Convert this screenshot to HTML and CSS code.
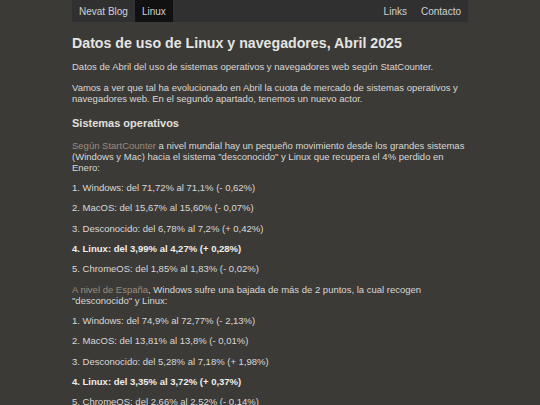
FILE: index.html
```html
<!DOCTYPE html>
<html lang="es">
<head>
<meta charset="utf-8">
<title>Datos de uso de Linux y navegadores, Abril 2025</title>
<link rel="stylesheet" href="styles.css">
</head>
<body>
<div class="container">
  <nav class="nav">
    <div class="nav-left">
      <a class="nav-item" href="#">Nevat Blog</a>
      <a class="nav-item active" href="#">Linux</a>
    </div>
    <div class="nav-right">
      <a class="nav-item" href="#">Links</a>
      <a class="nav-item" href="#">Contacto</a>
    </div>
  </nav>
  <main class="content">
    <h1 class="title">Datos de uso de Linux y navegadores, Abril 2025</h1>
    <p>Datos de Abril del uso de sistemas operativos y navegadores web según StatCounter.</p>
    <p>Vamos a ver que tal ha evolucionado en Abril la cuota de mercado de sistemas operativos y navegadores web. En el segundo apartado, tenemos un nuevo actor.</p>
    <h2 class="section">Sistemas operativos</h2>
    <p><a class="link" href="#">Según StartCounter</a> a nivel mundial hay un pequeño movimiento desde los grandes sistemas (Windows y Mac) hacia el sistema "desconocido" y Linux que recupera el 4% perdido en Enero:</p>
    <p>1. Windows: del 71,72% al 71,1% (- 0,62%)</p>
    <p>2. MacOS: del 15,67% al 15,60% (- 0,07%)</p>
    <p>3. Desconocido: del 6,78% al 7,2% (+ 0,42%)</p>
    <p><strong>4. Linux: del 3,99% al 4,27% (+ 0,28%)</strong></p>
    <p>5. ChromeOS: del 1,85% al 1,83% (- 0,02%)</p>
    <p><a class="link" href="#">A nivel de España</a>, Windows sufre una bajada de más de 2 puntos, la cual recogen "desconocido" y Linux:</p>
    <p>1. Windows: del 74,9% al 72,77% (- 2,13%)</p>
    <p>2. MacOS: del 13,81% al 13,8% (- 0,01%)</p>
    <p>3. Desconocido: del 5,28% al 7,18% (+ 1,98%)</p>
    <p><strong>4. Linux: del 3,35% al 3,72% (+ 0,37%)</strong></p>
    <p>5. ChromeOS: del 2,66% al 2,52% (- 0,14%)</p>
  </main>
</div>
</body>
</html>
```

FILE: styles.css
```css
html, body {
  margin: 0;
  padding: 0;
  background: #3c3a36;
  color: #d8d8d6;
  font-family: "Liberation Sans", Arial, sans-serif;
}

.container {
  width: 396px;
  margin: 0 auto;
}

.nav {
  display: flex;
  justify-content: space-between;
  background: #303030;
  height: 22px;
  font-size: 10px;
}

.nav-left, .nav-right {
  display: flex;
}

.nav-item {
  display: flex;
  align-items: center;
  padding: 0 7px;
  color: #d0d0d0;
  text-decoration: none;
}

.nav-item.active {
  background: #111111;
}

.content {
  font-size: 9.5px;
  line-height: 11px;
}

.title {
  font-size: 14.2px;
  line-height: 18px;
  margin: 12px 0 9px;
  color: #e4e4e2;
}

.section {
  font-size: 11px;
  line-height: 14px;
  margin: 12px 0 10px;
  color: #e0e0de;
}

.content p {
  margin: 9.35px 0;
}

.link {
  color: #9a8c7c;
  text-decoration: none;
}

strong {
  color: #eeeeec;
}
```
